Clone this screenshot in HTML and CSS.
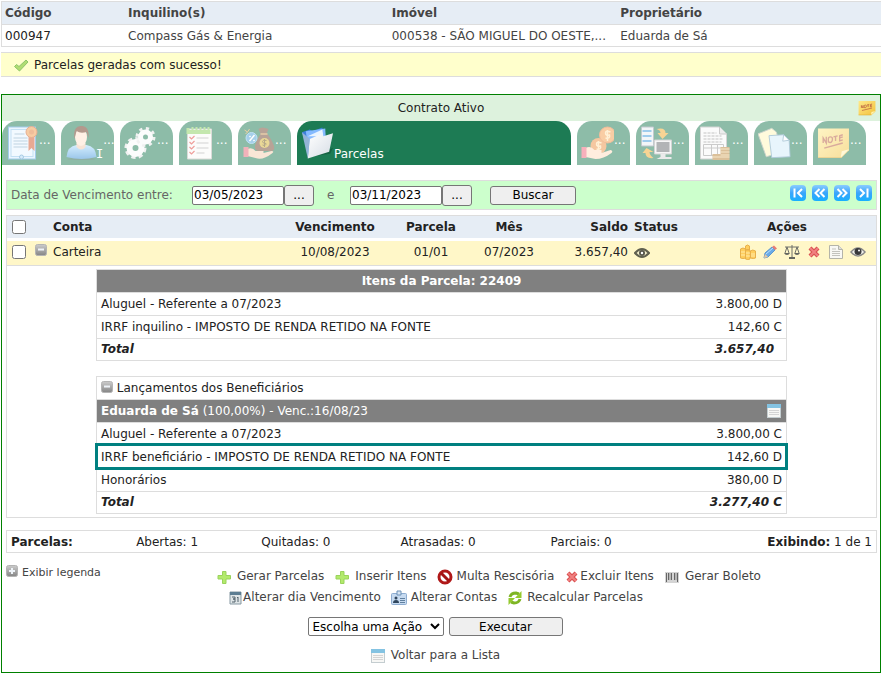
FILE: index.html
```html
<!DOCTYPE html>
<html lang="pt-BR">

<head>
  <meta charset="UTF-8" />
  <meta name="viewport" content="width=device-width, initial-scale=1.0" />
  <title>Contrato - Parcelas</title>
  <link rel="stylesheet" href="styles.css">
</head>

<body>

  <!-- Shared icons -->
  <svg class="sprite" aria-hidden="true">
    <defs>
      <linearGradient id="g-blue" x1="0" y1="0" x2="0" y2="1"><stop offset="0" stop-color="#8accff" /><stop offset=".5" stop-color="#3aa5fb" /><stop offset="1" stop-color="#18b0ff" /></linearGradient>
      <linearGradient id="g-grey" x1="0" y1="0" x2="0" y2="1"><stop offset="0" stop-color="#ccc" /><stop offset="1" stop-color="#858585" /></linearGradient>
      <linearGradient id="g-gold" x1="0" y1="0" x2="1" y2="1"><stop offset="0" stop-color="#ffe98a" /><stop offset="1" stop-color="#f2c13c" /></linearGradient>
      <linearGradient id="g-paper" x1="0" y1="0" x2="1" y2="1"><stop offset="0" stop-color="#fff" /><stop offset="1" stop-color="#d5dce4" /></linearGradient>
      <linearGradient id="g-sky" x1="0" y1="0" x2="0" y2="1"><stop offset="0" stop-color="#a8dcff" /><stop offset="1" stop-color="#3a8fd6" /></linearGradient>
    </defs>
    <symbol id="i-minus" viewBox="0 0 12 12">
      <rect x=".5" y=".5" width="11" height="11" rx="2" fill="url(#g-grey)" stroke="#b4b4b4" />
      <path d="M3 5.500h6" stroke="#eef3f8" stroke-width="2" />
    </symbol>
    <symbol id="i-plus-box" viewBox="0 0 12 12">
      <rect x=".5" y=".5" width="11" height="11" rx="2" fill="url(#g-grey)" stroke="#b4b4b4" />
      <path d="M3 6h6M6 3v6" stroke="#eef3f8" stroke-width="2" />
    </symbol>
    <symbol id="i-add" viewBox="0 0 16 16">
      <path d="M6.500 2.500h3.500v4h4.500v3.500h-4.500v4.500h-3.500v-4.500h-4.500v-3.500h4.500z" fill="#b2ea6c" stroke="#9ad35c" stroke-linejoin="round" />
    </symbol>
    <symbol id="i-delete" viewBox="0 0 16 16">
      <path d="M4 4l8 8M12 4l-8 8" stroke="#d95050" stroke-width="4.200" />
      <path d="M4 4l8 8M12 4l-8 8" stroke="#f08080" stroke-width="2" />
    </symbol>
    <symbol id="i-list" viewBox="0 0 16 16">
      <rect x="1.500" y="1.500" width="13" height="13" fill="#f7f7f5" stroke="#c4cdd0" />
      <path d="M1 1h14v4H1z" fill="#84c3e2" />
      <path d="M3 7.500h10M3 9.500h10M3 11.500h10" stroke="#d4d4d4" />
    </symbol>
    <symbol id="i-note" viewBox="0 0 32 32">
      <path d="M1 2h30v21l-7 7H1z" fill="url(#g-gold)" />
      <path d="M31 22l-8 8 1-6z" fill="#fff3b0" />
      <path d="M1 30h23" stroke="#dbab2b" />
      <path d="M6 16v-5l3 5v-6M11 12q0-2 2-2t2 2-1 3-3 0zM16 10l4-1M18 9.500V14M25 8l-3 1v5l3-1M22 11l3-1M7 21l18-5" fill="none" stroke="#b4583d" stroke-width="1.300" />
    </symbol>
  </svg>

  <table class="contract-info">
    <colgroup>
      <col class="col-code">
      <col class="col-tenant">
      <col class="col-property">
      <col>
    </colgroup>
    <tr>
      <th>Código</th>
      <th>Inquilino(s)</th>
      <th>Imóvel</th>
      <th>Proprietário</th>
    </tr>
    <tr>
      <td class="code">000947</td>
      <td>Compass Gás &amp; Energia</td>
      <td>000538 - SÃO MIGUEL DO OESTE,...</td>
      <td>Eduarda de Sá</td>
    </tr>
  </table>

  <div class="message">
    <svg class="icon" viewBox="0 0 16 16"><path d="M1.500 9.500l2-2 2.500 2 7-6.500 2 2L6.500 14z" fill="#b0dc72" stroke="#8cc56a" stroke-linejoin="round" /></svg>
    <span>Parcelas geradas com sucesso!</span>
  </div>

  <main class="panel">
    <div class="panel-title">
      <h1>Contrato Ativo</h1>
      <svg class="title-note" viewBox="0 0 32 32" preserveAspectRatio="none"><use href="#i-note" /></svg>
    </div>

    <nav class="tabs">
      <a class="tab" href="#" aria-label="Contrato">
        <svg viewBox="0 0 32 34">
          <rect x="2" y="1" width="27" height="32" fill="#d9efff" stroke="#4c9bd7" />
          <rect x="4.500" y="3.500" width="22" height="27" fill="#e6f5ff" stroke="#8bc2ea" />
          <path d="M8 8h10M7 12h14M7 15h14M7 18h14M7 21h14" stroke="#81a9c7" />
          <circle cx="15" cy="31" r="2" fill="#aed9f7" stroke="#4f95c9" />
          <path d="M22 8h6v17l-3-3-3 3z" fill="#d3552a" />
          <circle cx="25" cy="6" r="5.500" fill="#f19a49" stroke="#cf6126" />
          <circle cx="25" cy="6" r="2.500" fill="#e07d38" />
        </svg>
        <span class="dots">...</span>
      </a>
      <a class="tab" href="#" aria-label="Inquilino">
        <svg viewBox="0 0 32 34">
          <ellipse cx="16" cy="33" rx="14" ry="1" fill="#246047" />
          <path d="M1 31q1-11 10-12h10q9 1 10 12-15 4-30 0z" fill="url(#g-sky)" />
          <path d="M11 17h9v4q-4 5-9 0z" fill="#f2c9ad" />
          <ellipse cx="15.500" cy="11" rx="6" ry="9" fill="#ffe2cc" />
          <path d="M9 13Q7 1 15 0q9-1 8 12l-2-6q-6 2-10-1z" fill="#69361e" />
        </svg>
        <span class="tab-name initial">I</span>
        <span class="dots">...</span>
      </a>
      <a class="tab" href="#" aria-label="Configurações">
        <svg viewBox="0 0 32 34">
          <circle cx="11" cy="22" r="9" fill="none" stroke="#e4e4e4" stroke-width="4" stroke-dasharray="4 3" />
          <circle cx="11" cy="22" r="6" fill="none" stroke="#fafafa" stroke-width="6" />
          <circle cx="21" cy="11" r="8" fill="none" stroke="#e4e4e4" stroke-width="4" stroke-dasharray="3 3.300" />
          <circle cx="21" cy="11" r="5" fill="none" stroke="#fafafa" stroke-width="5" />
        </svg>
        <span class="dots">...</span>
      </a>
      <a class="tab" href="#" aria-label="Vistoria">
        <svg viewBox="0 0 32 34">
          <path d="M4 3h24v30H4z" fill="#fbfbf8" stroke="#b9b9b3" />
          <path d="M3 2h3v2h2V1h2v3h2V1h2v3h2V1h2v3h2V1h2v3h2V1h2v3h1v4H3z" fill="#8ad160" />
          <path d="M13 12h12M13 17h12M13 22h12M13 27h8" stroke="#a7a7a7" />
          <path d="M6 11l2 2 3-3M6 16l2 2 3-3M6 21l2 2 3-3M6 26l2 2 3-3" fill="none" stroke="#df3f38" stroke-width="1.200" />
        </svg>
        <span class="dots">...</span>
      </a>
      <a class="tab" href="#" aria-label="Taxas">
        <svg viewBox="0 0 32 34">
          <path d="M16 3q3-3 10 0l-2 5h-6zM18 8h7q11 16 4 17H16q-8-1 2-17z" fill="#734a32" />
          <path d="M18 8h7" stroke="#cf9c55" stroke-width="1.500" />
          <circle cx="22" cy="17" r="5" fill="#d5b331" />
          <path d="M24 14.500q-4-1-4 1t3.500 2q0 3-3.500 1.500M22 13v8" fill="none" stroke="#6d5516" />
          <circle cx="9" cy="12" r="5.500" fill="#4da1d6" stroke="#83c5ed" />
          <path d="M7 15l5-6M7 10l1 1M11 14l1 1" stroke="#fff" stroke-width="1.500" />
          <path d="M2 4l3 2 2-3M3 8l2-2" fill="none" stroke="#d4a34b" />
          <path d="M5 23q5-2 8 2h8v2l8-2q3 0 1 2-10 8-17 5l-8-2z" fill="#f7cfae" />
          <path d="M1 21h5v10H1z" fill="#e46777" />
        </svg>
        <span class="dots">...</span>
      </a>
      <a class="tab tab-active" href="#">
        <svg viewBox="0 0 34 34">
          <path d="M4 32q14-2 29-10l-3 6z" fill="#166343" />
          <path d="M1 6l8-3 3 2 10-4 3 19-17 9z" fill="#3d7fda" />
          <path d="M5 5l20-3 1 20-18 8z" fill="#85baff" />
          <path d="M7 10l15-7 1 7z" fill="#eaf4ff" />
          <path d="M9 13l11-5 3 2 10-3-4 19L7 33z" fill="url(#g-paper)" />
          <path d="M1 6l6 27 2-20z" fill="#93b4d7" />
        </svg>
        <span class="tab-name">Parcelas</span>
      </a>
      <a class="tab" href="#" aria-label="Repasses">
        <svg viewBox="0 0 32 34">
          <circle cx="17" cy="20" r="8" fill="#ec9044" />
          <circle cx="26" cy="9" r="8" fill="#f49d4c" stroke="#e57c37" />
          <path d="M29 6q-5-2-5 1t4 2q1 4-4 3M26 4v11M20 17q-5-2-5 1t4 2q1 4-4 3M17 15v10" fill="none" stroke="#ffe2ad" stroke-width="1.500" />
          <path d="M4 22q5-3 9 2h7v3l9-3q3 1 1 3-8 6-16 6l-10-2z" fill="#ffdcbe" />
          <path d="M0 21h5v11H0z" fill="#f2637a" />
        </svg>
        <span class="dots">...</span>
      </a>
      <a class="tab" href="#" aria-label="Transferência">
        <svg viewBox="0 0 32 34">
          <path d="M1 1h12v19H1z" fill="#e8eef3" stroke="#87949f" />
          <path d="M2 5h9M2 10h9M2 15h9" stroke="#429bdc" stroke-width="2" />
          <path d="M16 3q9-2 9 4h3l-6 6-5-6h3q0-3-4-4zM13 32q-8 1-8-5H2l4-5 7 4H9q0 3 4 6z" fill="#f2ab2b" />
          <path d="M14 14h17v14H14z" fill="#eee" stroke="#aaa" />
          <path d="M16 16h13v10H16z" fill="#686b70" />
          <path d="M20 28h5v3h6v2H16l4-2z" fill="#d9d9d9" />
        </svg>
        <span class="dots">...</span>
      </a>
      <a class="tab" href="#" aria-label="Extrato">
        <svg viewBox="0 0 32 34">
          <path d="M1 1h19l7 7v25H1z" fill="#f8f8f8" stroke="#aaa" />
          <path d="M20 1v7h7" fill="#ddd" stroke="#999" />
          <path d="M4 7h13M4 10h18M4 13h20M4 16h18" stroke="#888" stroke-dasharray="3 1" />
          <path d="M4 18.500h20v11H4zM4 22h20M12 19v11M18 19v11" fill="none" stroke="#999" />
          <path d="M21 21h9v13h-9zM13 28h9v6h-9z" fill="#b98237" />
          <path d="M21 23h9M21 26h9M21 29h9M13 31h17" stroke="#f0d299" />
        </svg>
        <span class="dots">...</span>
      </a>
      <a class="tab" href="#" aria-label="Documentos">
        <svg viewBox="0 0 36 34">
          <path d="M0 7L15 1l5 4 6 22-17 5z" fill="#fff8ba" stroke="#9ba99a" />
          <path d="M12 9l16-1 6 6 1 18-20 1z" fill="#d3edfb" stroke="#6497b6" />
          <path d="M28 8l-1 7 7-1z" fill="#fff" stroke="#6497b6" />
        </svg>
        <span class="dots">...</span>
      </a>
      <a class="tab" href="#" aria-label="Anotações">
        <svg viewBox="0 0 32 32"><use href="#i-note" /></svg>
        <span class="dots">...</span>
      </a>
    </nav>

    <form class="filter">
      <label class="filter-label" for="date-from">Data de Vencimento entre:</label>
      <input class="date" id="date-from" type="text" value="03/05/2023">
      <button class="pick" type="button">...</button>
      <label class="filter-and" for="date-to">e</label>
      <input class="date" id="date-to" type="text" value="03/11/2023">
      <button class="pick" type="button">...</button>
      <button class="search" type="button">Buscar</button>
      <div class="pager">
        <button type="button" aria-label="Primeira">
          <svg viewBox="0 0 16 16"><rect width="16" height="16" rx="4" fill="url(#g-blue)" /><path d="M4.500 3.500v9M12 4L8 8l4 4" /></svg>
        </button>
        <button type="button" aria-label="Anterior">
          <svg viewBox="0 0 16 16"><rect width="16" height="16" rx="4" fill="url(#g-blue)" /><path d="M7.500 4l-4 4 4 4M12.500 4l-4 4 4 4" /></svg>
        </button>
        <button type="button" aria-label="Próxima">
          <svg viewBox="0 0 16 16"><rect width="16" height="16" rx="4" fill="url(#g-blue)" /><path d="M3.500 4l4 4-4 4M8.500 4l4 4-4 4" /></svg>
        </button>
        <button type="button" aria-label="Última">
          <svg viewBox="0 0 16 16"><rect width="16" height="16" rx="4" fill="url(#g-blue)" /><path d="M4 4l4 4-4 4M11.500 3.500v9" /></svg>
        </button>
      </div>
    </form>

    <table class="installments">
      <colgroup>
        <col class="col-check">
        <col class="col-toggle">
        <col>
        <col class="col-due">
        <col class="col-number">
        <col class="col-month">
        <col class="col-balance">
        <col class="col-status">
        <col class="col-actions">
      </colgroup>
      <tr class="head">
        <th><input type="checkbox" aria-label="Selecionar todas"></th>
        <th></th>
        <th class="left">Conta</th>
        <th>Vencimento</th>
        <th>Parcela</th>
        <th>Mês</th>
        <th class="right">Saldo</th>
        <th class="left">Status</th>
        <th>Ações</th>
      </tr>
      <tr class="item">
        <td><input type="checkbox" aria-label="Selecionar parcela 01/01"></td>
        <td><button class="toggle" type="button" aria-label="Recolher"><svg><use href="#i-minus" /></svg></button></td>
        <td class="left">Carteira</td>
        <td>10/08/2023</td>
        <td>01/01</td>
        <td>07/2023</td>
        <td class="right">3.657,40</td>
        <td class="left">
          <svg class="icon status-icon" viewBox="0 0 16 16">
            <path d="M1 9q7-8 14 0-7 8-14 0z" fill="#f4efcb" stroke="#60604f" stroke-width="2" />
            <circle cx="8" cy="9" r="3" fill="#55554b" /><circle cx="8" cy="9" r="1.200" fill="#fff" />
          </svg>
        </td>
        <td>
          <div class="actions">
            <button type="button" aria-label="Receber">
              <svg viewBox="0 0 16 16">
                <path d="M5.500 2q2-2 4 0v4h-4zM.500 5q2.500-2 5 0v9q-2.500 1-5 0zM5.500 6q2-1 4.500 0v9q-2 1-4.500 0zM10.500 7q2-2 5 0v7q-2 1-5 0z" fill="#ffcf5e" stroke="#e8b04a" />
                <path d="M1 8h4M1 11h4M6 9h4M6 12h4M11 10h4M11 12h4" stroke="#ffeaa8" />
              </svg>
            </button>
            <button type="button" aria-label="Editar">
              <svg viewBox="0 0 16 16">
                <path d="M2 14l1-5 7-6 3 3-7 7z" fill="#6aabe7" stroke="#5b97cf" />
                <path d="M2 14l1-4 3 3z" fill="#eac99e" /><path d="M10 3l2-1.500 3 3L13 6z" fill="#e77d75" /><path d="M4 10l7-6" stroke="#b9e0ff" />
              </svg>
            </button>
            <button type="button" aria-label="Jurídico">
              <svg viewBox="0 0 16 16">
                <path d="M8 1v12M1 3h14M5 14h6M3 3l-2 6M3 3l2 6M13 3l-2 6M13 3l2 6" stroke="#6f716a" />
                <path d="M0 9h6q-1 2-3 2T0 9zM10 9h6q-1 2-3 2t-3-2zM5 13h6v2H5z" fill="#64665f" />
              </svg>
            </button>
            <button type="button" aria-label="Excluir"><svg><use href="#i-delete" /></svg></button>
            <button type="button" aria-label="Documento">
              <svg viewBox="0 0 16 16">
                <path d="M1.500 1.500h9l4 4v9h-13z" fill="#f8f8f4" stroke="#b4b4a9" /><path d="M10.500 1.500v4h4" fill="#ddd" stroke="#b4b4a9" />
                <path d="M4 5h4M4 7.500h8M4 9.500h8M4 11.500h8" stroke="#c3c3bd" />
              </svg>
            </button>
            <button type="button" aria-label="Visualizar">
              <svg viewBox="0 0 16 16">
                <path d="M1 8q7-8 14 0-7 8-14 0z" fill="#f3f3ee" stroke="#888" stroke-width="1.500" />
                <circle cx="8" cy="7.500" r="3.500" fill="#38383a" /><circle cx="9" cy="6.500" r="1" fill="#fff" />
              </svg>
            </button>
          </div>
        </td>
      </tr>
      <tr>
        <td class="detail" colspan="9">
          <table class="entries">
            <tr>
              <th colspan="2">Itens da Parcela: 22409</th>
            </tr>
            <tr>
              <td>Aluguel - Referente a 07/2023</td>
              <td class="right">3.800,00 D</td>
            </tr>
            <tr>
              <td>IRRF inquilino - IMPOSTO DE RENDA RETIDO NA FONTE</td>
              <td class="right">142,60 C</td>
            </tr>
            <tr class="total">
              <td>Total</td>
              <td class="right no-sign">3.657,40</td>
            </tr>
          </table>

          <table class="entries">
            <tr class="group">
              <td colspan="2">
                <button class="toggle" type="button" aria-label="Recolher"><svg><use href="#i-minus" /></svg></button>
                Lançamentos dos Beneficiários
              </td>
            </tr>
            <tr class="owner">
              <td><b>Eduarda de Sá</b> (100,00%) - Venc.:16/08/23</td>
              <td class="right"><svg class="icon"><use href="#i-list" /></svg></td>
            </tr>
            <tr>
              <td>Aluguel - Referente a 07/2023</td>
              <td class="right">3.800,00 C</td>
            </tr>
            <tr class="highlight">
              <td>IRRF beneficiário - IMPOSTO DE RENDA RETIDO NA FONTE</td>
              <td class="right">142,60 D</td>
            </tr>
            <tr>
              <td>Honorários</td>
              <td class="right">380,00 D</td>
            </tr>
            <tr class="total">
              <td>Total</td>
              <td class="right">3.277,40 C</td>
            </tr>
          </table>
        </td>
      </tr>
    </table>

    <div class="summary">
      <b>Parcelas:</b>
      <span>Abertas: 1</span>
      <span>Quitadas: 0</span>
      <span>Atrasadas: 0</span>
      <span>Parciais: 0</span>
      <span class="showing"><b>Exibindo:</b> 1 de 1</span>
    </div>

    <div class="footer">
      <a class="legend" href="#"><svg><use href="#i-plus-box" /></svg>Exibir legenda</a>
      <div class="links">
        <a href="#"><svg class="icon"><use href="#i-add" /></svg>Gerar Parcelas</a>
        <a href="#"><svg class="icon"><use href="#i-add" /></svg>Inserir Itens</a>
        <a class="tight" href="#">
          <svg class="icon" viewBox="0 0 16 16"><circle cx="8" cy="8" r="6" fill="#fff" stroke="#b01818" stroke-width="3" /><path d="M4 4l8 8" stroke="#a31212" stroke-width="3" /></svg>Multa Rescisória</a>
        <a class="flush" href="#"><svg class="icon"><use href="#i-delete" /></svg>Excluir Itens</a>
        <a href="#">
          <svg class="icon" viewBox="0 0 16 16"><path d="M1 3h14v11H1z" fill="#d4d4d4" /><path d="M2.500 4v9M4.500 4v7M7.500 4v7M10.500 4v7M13.500 4v9" stroke="#666" /><path d="M6 4v7M12 4v7" stroke="#999" /></svg>Gerar Boleto</a>
      </div>
      <div class="links links-last">
        <a class="flush" href="#">
          <svg class="icon" viewBox="0 0 16 16"><path d="M3 2h11v12H3z" fill="#dfe5e7" stroke="#8799a3" /><path d="M3 2h11v3H3z" fill="#5c7d92" /><path d="M5 7h3v2H6h2v3H5M10 8l1-1v5" fill="none" stroke="#52636c" /></svg>Alterar dia Vencimento</a>
        <a class="tight" href="#">
          <svg class="icon" viewBox="0 0 16 16"><rect x=".5" y="3.500" width="15" height="11" rx="1" fill="#c6daf0" stroke="#8dacd0" /><path d="M6 1h4v4H6z" fill="#d7e5f4" stroke="#6c91b7" /><circle cx="5" cy="8" r="1.500" fill="#30465d" /><path d="M2 13q0-3 3-3t3 3z" fill="#30465d" /><path d="M9 8.500h5M9 10.500h5M9 12.500h5" stroke="#60809f" /></svg>Alterar Contas</a>
        <a class="tight" href="#">
          <svg class="icon" viewBox="0 0 16 16"><path d="M3 7q1-4 6-4l3 1M13 9q-1 4-6 4l-3-1" fill="none" stroke="#7eb524" stroke-width="3" /><path d="M14.500 1v7H8zM1.500 15V8H8z" fill="#94c92e" /></svg>Recalcular Parcelas</a>
      </div>
      <div class="execute">
        <select aria-label="Ação">
          <option>Escolha uma Ação</option>
        </select>
        <button type="button">Executar</button>
      </div>
      <div class="links back">
        <a href="#"><svg class="icon"><use href="#i-list" /></svg>Voltar para a Lista</a>
      </div>
    </div>
  </main>

</body>

</html>
```
FILE: styles.css
```css
* {
  box-sizing: border-box;
}

body {
  margin: 0;
  padding: 1px 0 0 1px;
  background: #fff;
  color: #222;
  font-family: Verdana, "DejaVu Sans", sans-serif;
  font-size: 12px;
  line-height: 16px;
}

a {
  color: #444;
  text-decoration: none;
}

table {
  width: 100%;
  border-collapse: separate;
  border-spacing: 0;
  table-layout: fixed;
}

button,
input,
select {
  font: inherit;
}

.sprite {
  position: absolute;
  width: 0;
  height: 0;
}

.icon {
  width: 16px;
  height: 16px;
  vertical-align: middle;
}

.right {
  text-align: right;
}

/* Contract header */
.contract-info {
  border: 1px solid #ddd;
  border-right: none;
  color: #444;
}

.contract-info th,
.contract-info td {
  height: 21px;
  padding: 0 3px;
  text-align: left;
  white-space: nowrap;
}

.contract-info th {
  height: 23px;
  background: #e6edf5;
  border-bottom: 1px solid #ddd;
}

.contract-info .code {
  color: #222;
}

.col-code {
  width: 14%;
}

.col-tenant {
  width: 30%;
}

.col-property {
  width: 26%;
}

.message {
  display: flex;
  align-items: center;
  gap: 5px;
  height: 25px;
  margin-top: 5px;
  padding-left: 12px;
  background: #ffc;
  border: 1px solid #ddd;
  border-width: 1px 0;
}

/* Main panel */
.panel {
  margin-top: 17px;
  border: 1px solid #008000;
}

.panel-title {
  position: relative;
  padding: 5px;
  background: #ddf2dd;
}

.panel-title h1 {
  margin: 0;
  font-size: 12px;
  font-weight: normal;
  text-align: center;
}

.title-note {
  position: absolute;
  top: 5px;
  right: 4px;
  width: 18px;
  height: 16px;
}

/* Tabs */
.tabs {
  display: flex;
  gap: 6px;
  padding-right: 14px;
}

.tab {
  display: flex;
  align-items: center;
  width: 53px;
  height: 44px;
  padding-left: 4px;
  background: #1d7b54;
  border-radius: 15px 15px 0 0;
  color: #fff;
  opacity: .5;
}

.tab svg {
  flex: none;
  width: 33px;
  height: 34px;
}

.tab-active {
  flex: 1;
  opacity: 1;
}

.tab-name {
  align-self: flex-end;
  padding-bottom: 3px;
}

.initial {
  margin-left: -2px;
  font-family: "DejaVu Sans Mono", monospace;
}

.dots {
  padding-bottom: 6px;
}

/* Date filter */
.filter {
  display: flex;
  align-items: center;
  height: 30px;
  margin: 15px 3px 5px 4px;
  padding: 0 4px;
  background: #cfc;
  border: 1px solid #ddd;
  color: #666;
}

.filter-label {
  width: 181px;
}

.filter-and {
  width: 36px;
  padding-left: 13px;
}

.date {
  width: 92px;
  height: 19px;
  padding: 0 1px;
  border: 1px solid #767676;
  border-radius: 2px;
  color: #000;
}

.pick,
.search,
.execute button {
  padding: 0;
  background: #efefef;
  border: 1px solid #767676;
  border-radius: 3px;
  color: #000;
}

.pick {
  width: 30px;
  height: 21px;
}

.search {
  width: 86px;
  height: 19px;
  margin-left: 18px;
}

.pager {
  display: flex;
  gap: 6px;
  margin-left: auto;
  padding-bottom: 4px;
}

.pager button,
.actions button,
.toggle {
  padding: 0;
  background: none;
  border: none;
}

.pager svg {
  display: block;
  width: 16px;
  height: 16px;
}

.pager path {
  fill: none;
  stroke: #fff;
  stroke-width: 2;
}

/* Installments table */
.installments {
  width: calc(100% - 7px);
  margin: 0 3px 0 4px;
  border: 1px solid #ddd;
}

.installments th,
.installments td {
  padding: 0 3px;
  text-align: center;
}

.installments .left {
  text-align: left;
}

.installments .right {
  text-align: right;
}

.installments .head th {
  height: 25px;
  background: #e6edf5;
  border-bottom: 3px solid #fff;
}

.installments .item td {
  height: 25px;
  padding-bottom: 2px;
  background: #fff7c8;
  border-bottom: 1px solid #ddd;
}

.installments input {
  display: block;
  width: 14px;
  height: 14px;
  margin: 0 0 0 2px;
}

.toggle svg {
  display: block;
  width: 12px;
  height: 12px;
}

.col-check {
  width: 24px;
}

.col-toggle {
  width: 19px;
}

.col-due {
  width: 100px;
}

.col-number {
  width: 92px;
}

.col-month {
  width: 64px;
}

.col-balance {
  width: 90px;
}

.col-status {
  width: 67px;
}

.col-actions {
  width: 178px;
}

.status-icon {
  display: block;
}

.actions {
  display: flex;
  justify-content: flex-end;
  gap: 6px;
  padding-right: 7px;
}

.actions svg {
  display: block;
  width: 16px;
  height: 16px;
}

.installments .detail {
  padding: 3px 89px;
}

/* Entries inside an installment */
.entries {
  border: 1px solid #ddd;
}

.entries + .entries {
  margin-top: 15px;
}

.entries th {
  height: 22px;
  background: #808080;
  color: #fff;
}

.installments .entries td {
  height: 23px;
  padding: 0 4px 1px;
  border-top: 1px solid #ddd;
  text-align: left;
  white-space: nowrap;
}

.installments .entries .right {
  text-align: right;
}

.entries td:first-child {
  width: 80%;
}

.installments .entries .group td {
  height: 22px;
  border-top: none;
}

.entries .toggle {
  vertical-align: text-top;
}

.entries .owner td {
  background: #808080;
  color: #fff;
}

.entries .owner .icon {
  display: block;
  margin-left: auto;
}

.entries .total {
  font-weight: bold;
  font-style: italic;
}

.installments .entries .total td {
  height: 22px;
}

.installments .entries .no-sign {
  padding-right: 12px;
}

.entries .highlight {
  outline: 3px solid #008080;
  outline-offset: -1px;
}

/* Totals */
.summary {
  display: flex;
  align-items: center;
  height: 23px;
  margin: 12px 3px 0 4px;
  padding: 0 4px;
  border: 1px solid #ddd;
}

.summary > * {
  flex: 144 1 0;
}

.summary > :first-child,
.summary > :nth-child(2) {
  flex-grow: 125;
}

.summary > :nth-child(3) {
  flex-grow: 139;
}

.summary > :nth-child(4) {
  flex-grow: 150;
}

.summary > .showing {
  flex-grow: 177;
  text-align: right;
}

/* Footer */
.footer {
  padding: 12px 4px 9px;
  text-align: center;
}

.legend {
  display: flex;
  float: left;
  gap: 4px;
  font-size: 11px;
}

.legend svg {
  width: 12px;
  height: 12px;
}

.links {
  display: flex;
  justify-content: center;
  gap: 10px;
  padding-top: 3px;
}

.links a {
  display: flex;
  gap: 5px;
}

.links .tight {
  gap: 4px;
}

.links .flush {
  gap: 0;
}

.links .icon {
  position: relative;
  top: 1px;
}

.links-last {
  padding: 5px 12px 0 0;
}

.execute {
  display: flex;
  justify-content: center;
  gap: 5px;
  padding: 12px 12px 0 0;
}

.execute select {
  width: 136px;
  height: 19px;
  background: #fff;
  border: 1px solid #767676;
  border-radius: 2px;
  color: #000;
}

.execute button {
  width: 114px;
  height: 19px;
}

.back {
  padding: 11px 12px 0 0;
}
```
